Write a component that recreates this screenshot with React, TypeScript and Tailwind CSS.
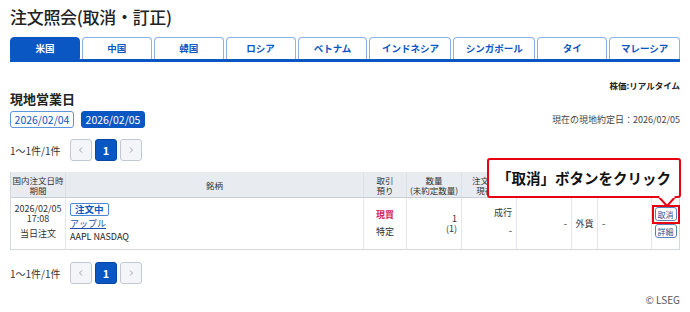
import React from "react";

const tabs: { label: string; w: string; active?: boolean }[] = [
  { label: "米国", w: "w-[70px]", active: true },
  { label: "中国", w: "w-[70px]" },
  { label: "韓国", w: "w-[70px]" },
  { label: "ロシア", w: "w-[70px]" },
  { label: "ベトナム", w: "w-[70px]" },
  { label: "インドネシア", w: "w-[82px]" },
  { label: "シンガポール", w: "w-[82px]" },
  { label: "タイ", w: "w-[70px]" },
  { label: "マレーシア", w: "w-[71px]" },
];

function Pager() {
  return (
    <div className="flex items-center h-[22px]">
      <span className="text-[10px] text-[#333] w-[60px]">1〜1件/1件</span>
      <div className="flex gap-[3px]">
        <div className="w-[22px] h-[22px] rounded-[3px] border border-[#c3c9d2] bg-[#f3f5f8] flex items-center justify-center">
          <svg width="8" height="8" viewBox="0 0 8 8"><path d="M5 1.5 L2.5 4 L5 6.5" fill="none" stroke="#9aa3ae" strokeWidth="1" /></svg>
        </div>
        <div className="w-[22px] h-[22px] rounded-[3px] border border-[#0a46a0] bg-[#0a56c2] flex items-center justify-center text-white text-[11px] font-bold">1</div>
        <div className="w-[22px] h-[22px] rounded-[3px] border border-[#c3c9d2] bg-[#f3f5f8] flex items-center justify-center">
          <svg width="8" height="8" viewBox="0 0 8 8"><path d="M3 1.5 L5.5 4 L3 6.5" fill="none" stroke="#9aa3ae" strokeWidth="1" /></svg>
        </div>
      </div>
    </div>
  );
}

export default function App() {
  return (
    <div
      className="relative w-[690px] h-[312px] bg-white overflow-hidden text-[#222]"
      style={{ fontFamily: '"Noto Sans CJK JP", "Noto Sans", sans-serif' }}
    >
      <div className="px-[10px]">
        <div className="pt-[6px] h-[24px] text-[17px] leading-[22px] font-medium tracking-[-0.3px]">注文照会(取消・訂正)</div>

        <div className="mt-[13px] flex gap-[2px] items-end">
          {tabs.map((t) => (
            <div
              key={t.label}
              className={`${t.w} h-[22px] rounded-t-[4px] flex items-center justify-center text-[9.5px] font-bold ${
                t.active ? "bg-[#0a56c2] text-white border border-[#0a56c2]" : "bg-white text-[#0a56c2] border border-[#8bb2e6] border-b-0"
              }`}
            >
              {t.label}
            </div>
          ))}
        </div>
        <div className="h-[3px] bg-[#0a56c2]" />

        <div className="mt-[17px] flex justify-end text-[8.5px] font-bold leading-[12px]">株価:リアルタイム</div>
        <div className="text-[13px] font-bold leading-[16px]">現地営業日</div>
        <div className="mt-[4px] flex items-center justify-between">
          <div className="flex gap-[7px]">
            <div className="w-[64px] h-[17px] rounded-[3px] border border-[#5f95da] text-[#0a56c2] text-[10.5px] flex items-center justify-center">2026/02/04</div>
            <div className="w-[64px] h-[17px] rounded-[3px] border border-[#0a56c2] bg-[#0a56c2] text-white text-[10.5px] flex items-center justify-center">2026/02/05</div>
          </div>
          <div className="text-[9px] text-[#444]">現在の現地約定日：2026/02/05</div>
        </div>

        <div className="mt-[11px]">
          <Pager />
        </div>

        <div className="mt-[11px] border border-[#d3d8df] border-t-0">
          <div className="flex h-[26px] bg-[#e8ebef] border-b border-[#c9cfd7] text-[8.5px] text-[#333] leading-[10px]">
            <div className="w-[54px] flex flex-col items-center justify-center">
              <span>国内注文日時</span>
              <span>期間</span>
            </div>
            <div className="w-[298px] border-l border-[#dde1e6] flex items-center justify-center">銘柄</div>
            <div className="w-[43px] border-l border-[#dde1e6] flex flex-col items-center justify-center">
              <span>取引</span>
              <span>預り</span>
            </div>
            <div className="w-[55px] border-l border-[#dde1e6] flex flex-col items-center justify-center">
              <span>数量</span>
              <span>(未約定数量)</span>
            </div>
            <div className="w-[55px] border-l border-[#dde1e6] flex flex-col items-center justify-center">
              <span>注文単価</span>
              <span>現在値</span>
            </div>
            <div className="w-[55px] border-l border-[#dde1e6]" />
            <div className="w-[26px] border-l border-[#dde1e6]" />
            <div className="w-[54px] border-l border-[#dde1e6]" />
            <div className="flex-1 border-l border-[#dde1e6]" />
          </div>
          <div className="flex h-[51px] text-[9.5px] text-[#333] leading-[11px]">
            <div className="w-[54px] flex flex-col items-center pt-[6px] text-[9px]">
              <span className="leading-[10px]">2026/02/05</span>
              <span className="leading-[10px]">17:08</span>
              <span className="mt-[4px] leading-[11px]">当日注文</span>
            </div>
            <div className="w-[298px] border-l border-[#e3e6ea] pl-[4px] pt-[5px] flex flex-col items-start">
              <span className="h-[13px] px-[4px] border border-[#4c86d4] rounded-[2px] text-[#0a56c2] text-[9.5px] font-bold leading-[11px]">注文中</span>
              <span className="mt-[2px] text-[#1d4fa8] underline text-[9px]">アップル</span>
              <span className="mt-[2px] text-[9px] text-[#222]">AAPL NASDAQ</span>
            </div>
            <div className="w-[43px] border-l border-[#e3e6ea] flex flex-col items-center pt-[11px]">
              <span className="text-[#d6245a] font-bold text-[9px]">現買</span>
              <span className="mt-[6px] text-[9px]">特定</span>
            </div>
            <div className="w-[55px] border-l border-[#e3e6ea] flex flex-col items-end justify-center pr-[4px] text-[9px] leading-[10px]">
              <span>1</span>
              <span>(1)</span>
            </div>
            <div className="w-[55px] border-l border-[#e3e6ea] flex flex-col items-end pr-[4px] pt-[9px]">
              <span className="text-[9px]">成行</span>
              <span className="mt-[7px]">-</span>
            </div>
            <div className="w-[55px] border-l border-[#e3e6ea] flex items-center justify-end pr-[4px]">-</div>
            <div className="w-[26px] border-l border-[#e3e6ea] flex items-center justify-center text-[9px]">外貨</div>
            <div className="w-[54px] border-l border-[#e3e6ea] flex items-center pl-[4px]">-</div>
            <div className="flex-1 border-l border-[#e3e6ea] flex flex-col items-center pt-[9px] gap-[3px]">
              <span className="w-[22px] h-[14px] rounded-[3px] border border-[#5a7fc0] text-[#2a4f96] text-[8px] flex items-center justify-center">取消</span>
              <span className="w-[22px] h-[14px] rounded-[3px] border border-[#5a7fc0] text-[#2a4f96] text-[8px] flex items-center justify-center">詳細</span>
            </div>
          </div>
        </div>

        <div className="mt-[12px]">
          <Pager />
        </div>

        <div className="mt-[8px] flex justify-end text-[10px] text-[#555]">© LSEG</div>
      </div>

      {/* callout overlay */}
      <div className="absolute left-[487px] top-[158px] w-[194px] h-[40px] border-2 border-[#e60012] rounded-[3px] bg-white flex items-center justify-center whitespace-nowrap text-[14.5px] font-bold text-[#111]">
        「取消」ボタンをクリック
      </div>
      <svg className="absolute left-[657px] top-[196px]" width="20" height="11" viewBox="0 0 20 11">
        <path d="M1 0 L10 10 L19 0" fill="white" stroke="#e60012" strokeWidth="2" />
        <rect x="2.5" y="0" width="15" height="2" fill="white" />
      </svg>
      <div className="absolute left-[652px] top-[205px] w-[28px] h-[19px] border-2 border-[#e60012]" />
    </div>
  );
}
